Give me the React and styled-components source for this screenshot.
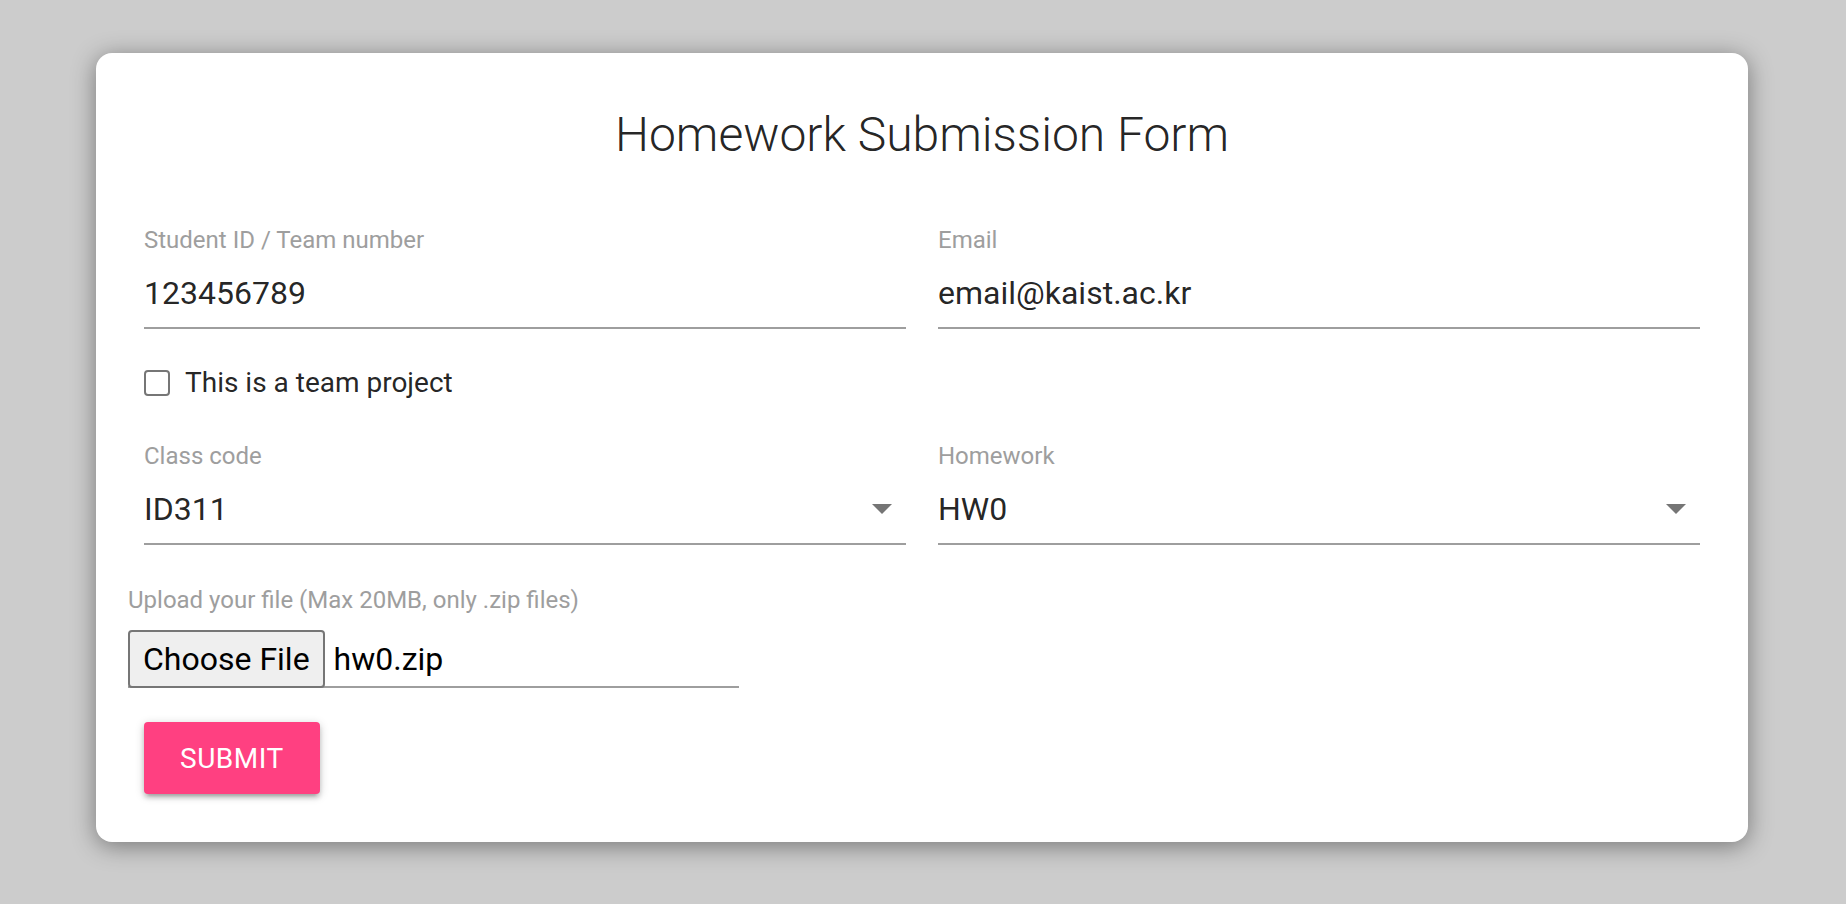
import React from "react";
import styled, { createGlobalStyle } from "styled-components";

const Global = createGlobalStyle`
  html, body { margin: 0; padding: 0; }
  body {
    background: #cccccc;
    font-family: Roboto, "Liberation Sans", Arial, sans-serif;
    min-height: 100vh;
  }
  * { box-sizing: border-box; }
`;

const Card = styled.form`
  width: 1652px;
  margin: 53px 0 0 96px;
  background: #ffffff;
  border-radius: 16px;
  box-shadow: 0 4px 24px rgba(0, 0, 0, 0.42);
  padding: 54px 48px 48px;
  display: flex;
  flex-direction: column;
  align-items: stretch;
`;

const Title = styled.h1`
  margin: 0;
  font-size: 48px;
  line-height: 56px;
  font-weight: 300;
  text-align: center;
  color: rgba(0, 0, 0, 0.87);
`;

const FieldGrid = styled.div`
  display: grid;
  grid-template-columns: 762px 762px;
  column-gap: 32px;
  margin-top: ${(p) => p.$top}px;
`;

const Field = styled.div`
  display: flex;
  flex-direction: column;
`;

const Label = styled.label`
  font-size: 24px;
  line-height: 24px;
  color: #9e9e9e;
  margin-left: ${(p) => (p.$outdent ? "-16px" : "0")};
  margin-top: ${(p) => p.$top || 0}px;
`;

const Value = styled.div`
  margin-top: 25px;
  font-size: 32px;
  line-height: 32px;
  padding-bottom: 18px;
  border-bottom: 2px solid #9e9e9e;
  color: rgba(0, 0, 0, 0.87);
  display: flex;
  align-items: center;
  justify-content: space-between;
`;

const Arrow = styled.svg`
  width: 20px;
  height: 10px;
  margin-right: 14px;
  flex: none;
`;

const CheckRow = styled.label`
  display: flex;
  align-items: center;
  height: 28px;
  margin-top: 40px;
  font-size: 28px;
  line-height: 28px;
  color: rgba(0, 0, 0, 0.87);
`;

const Box = styled.span`
  width: 26px;
  height: 26px;
  border: 2px solid #767676;
  border-radius: 4px;
  background: #fff;
  margin-right: 15px;
  flex: none;
`;

const FileRow = styled.div`
  display: flex;
  align-items: flex-start;
  width: 611px;
  height: 58px;
  margin-top: 18px;
  margin-left: -16px;
  border-bottom: 2px solid #9e9e9e;
`;

const FileButton = styled.button`
  height: 58px;
  padding: 0 13px;
  border: 2px solid #767676;
  border-radius: 4px;
  background: #efefef;
  font-family: Roboto, "Liberation Sans", Arial, sans-serif;
  font-size: 32px;
  color: #000;
  flex: none;
`;

const FileName = styled.span`
  margin-left: 9px;
  font-size: 32px;
  line-height: 58px;
  color: #000;
`;

const Submit = styled.button`
  align-self: flex-start;
  margin-top: 34px;
  height: 72px;
  padding: 0 36px;
  border: none;
  border-radius: 4px;
  background: #ff4081;
  color: #fff;
  font-family: Roboto, "Liberation Sans", Arial, sans-serif;
  font-size: 28px;
  letter-spacing: 0.5px;
  text-transform: uppercase;
  box-shadow: 0 4px 4px 0 rgba(0, 0, 0, 0.14), 0 6px 2px -4px rgba(0, 0, 0, 0.12),
    0 2px 10px 0 rgba(0, 0, 0, 0.2);
`;

const DropArrow = () => (
  <Arrow viewBox="0 0 20 10">
    <path d="M0 0 L20 0 L10 10 Z" fill="#757575" />
  </Arrow>
);

export default function App() {
  return (
    <>
      <Global />
      <Card onSubmit={(e) => e.preventDefault()}>
        <Title>Homework Submission Form</Title>
        <FieldGrid $top={65}>
          <Field>
            <Label>Student ID / Team number</Label>
            <Value>123456789</Value>
          </Field>
          <Field>
            <Label>Email</Label>
            <Value>email@kaist.ac.kr</Value>
          </Field>
        </FieldGrid>
        <CheckRow>
          <Box />
          This is a team project
        </CheckRow>
        <FieldGrid $top={47}>
          <Field>
            <Label>Class code</Label>
            <Value>
              ID311
              <DropArrow />
            </Value>
          </Field>
          <Field>
            <Label>Homework</Label>
            <Value>
              HW0
              <DropArrow />
            </Value>
          </Field>
        </FieldGrid>
        <Label $outdent $top={43}>
          Upload your file (Max 20MB, only .zip files)
        </Label>
        <FileRow>
          <FileButton type="button">Choose File</FileButton>
          <FileName>hw0.zip</FileName>
        </FileRow>
        <Submit type="submit">Submit</Submit>
      </Card>
    </>
  );
}
